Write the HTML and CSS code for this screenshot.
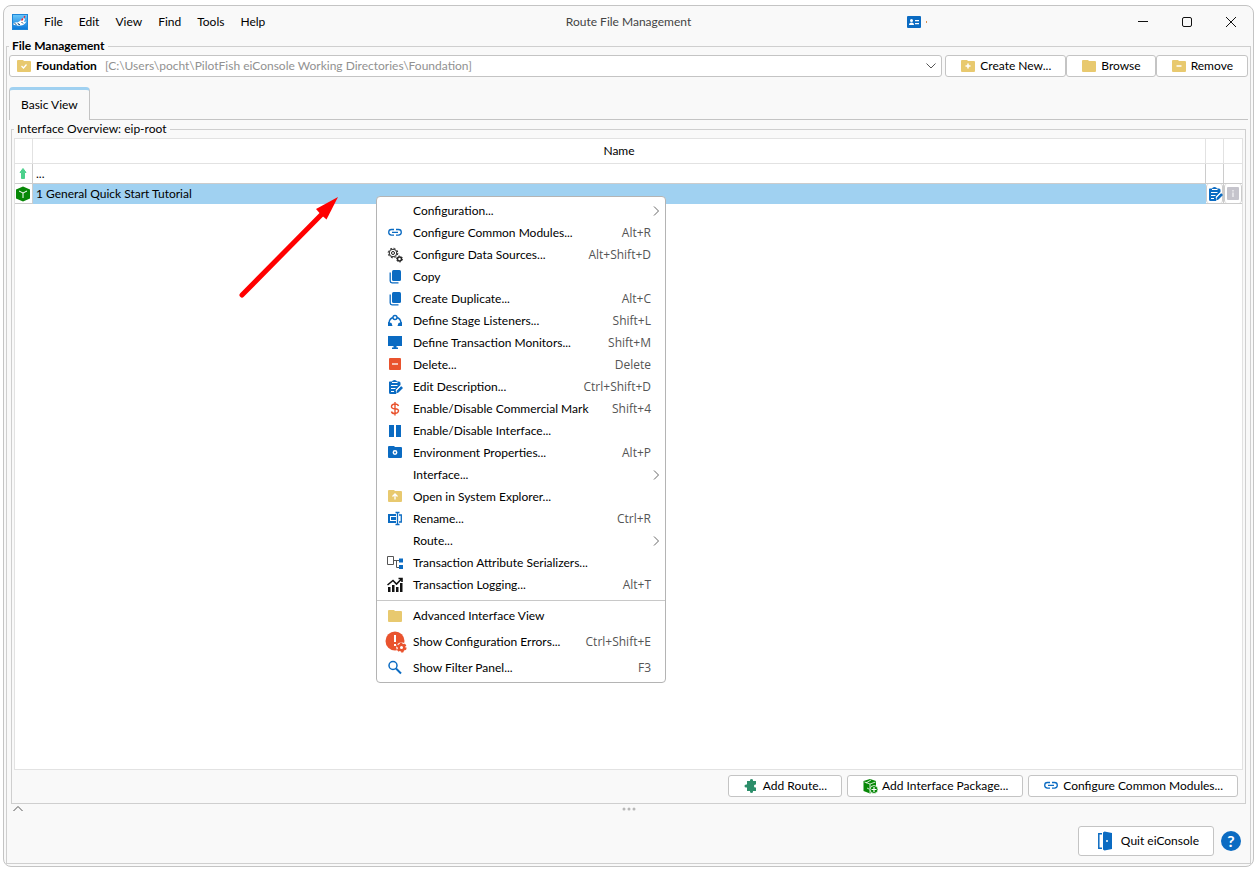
FILE: index.html
```html
<!DOCTYPE html>
<html lang="en">
<head>
  <meta charset="UTF-8">
  <meta name="viewport" content="width=device-width, initial-scale=1.0">
  <title>Route File Management</title>
  <link rel="stylesheet" href="styles.css">
</head>
<body>
  <!-- Shared icons -->
  <svg class="sprite" aria-hidden="true">
    <symbol id="i-folder" viewBox="0 0 16 16"><path fill="#e8c96f" d="M2 2h5l1 1h6q1 0 1 1v9q0 1-1 1H2q-1 0-1-1V3q0-1 1-1z"/></symbol>
    <symbol id="i-link" viewBox="0 0 16 16"><path fill="none" stroke="#0b6bc2" stroke-width="1.300" d="M7 4.500H4.500a2.800 2.800 0 0 0 0 5.600H7M9 4.500h2.500a2.800 2.800 0 0 1 0 5.600H9M5 7.300h6"/></symbol>
    <symbol id="i-copy" viewBox="0 0 16 16"><rect x="5" y="1" width="9" height="11" rx="1.500" fill="#0b6bc2"/><path fill="none" stroke="#0b6bc2" stroke-width="1.300" d="M3.200 3.500v8.500q0 1.800 1.800 1.800h6.500"/></symbol>
    <symbol id="i-edit" viewBox="0 0 16 16"><path fill="#0b6bc2" d="M2.500 2.500H5Q5.500 1 7.500 1T10 2.500h2q1.500 0 1.500 1.500v2L9 10.500V15H3.500Q2 15 2 13.500V3z"/><path fill="#0b6bc2" d="M10 11.500l4-4.500 2 2-4.500 4.500-2.500 1z"/><path stroke="#fff" d="M5 3.500h5.500M4 6.500h6.500M4 9.500h4.500M4 12.500h3M9 11.500l4.500-4.500"/></symbol>
  </svg>

  <div class="window">
    <header class="titlebar">
      <div class="titlebar-left">
        <svg class="logo" viewBox="0 0 16 16">
          <defs><linearGradient id="logo-fill" x2="0" y2="1"><stop stop-color="#6cc9fb"/><stop offset="1" stop-color="#0876d8"/></linearGradient></defs>
          <rect x=".5" y=".5" width="15" height="15" fill="url(#logo-fill)" stroke="#1e86d8"/>
          <path fill="#fff" d="M1 10q2-2.500 4.500-1.500L8 7l3-3 2 1-1 3 2.500-.5-1.500 2q-2 2.500-5 2-2 .5-4-.5-2 .500-3-1z"/>
          <path fill="none" stroke="#164b7b" d="M2.500 9.500l2 1M6 9q0 2 2 1.500M9.500 8l1.500 1.500"/>
          <path fill="none" stroke="#e32233" stroke-width="1.400" d="M9.500 6.500l1.500-2M12 3.500l1-1.200"/>
        </svg>
        <nav class="menubar">
          <button type="button">File</button>
          <button type="button">Edit</button>
          <button type="button">View</button>
          <button type="button">Find</button>
          <button type="button">Tools</button>
          <button type="button">Help</button>
        </nav>
      </div>
      <h1 class="title">Route File Management</h1>
      <div class="titlebar-right">
        <div class="account">
          <svg class="icon" viewBox="0 0 16 16"><rect x="1" y="2" width="14" height="12" rx="1" fill="#0b6bc2"/><circle cx="5.500" cy="6.500" r="1.500" fill="#fff"/><path fill="#fff" d="M3 11q0-2.500 2.500-2.500T8 11zM9 6h4v1.300H9zM9 9h4v1.300H9z"/></svg>
          <span class="account-dot"></span>
        </div>
        <div class="window-controls">
          <button type="button" aria-label="Minimize"><svg class="icon" viewBox="0 0 16 16"><path d="M3 7.500h10"/></svg></button>
          <button type="button" aria-label="Maximize"><svg class="icon" viewBox="0 0 16 16"><rect x="3.500" y="3.500" width="9" height="9" rx="1.500"/></svg></button>
          <button type="button" aria-label="Close"><svg class="icon" viewBox="0 0 16 16"><path d="M3 3l10 10M13 3L3 13"/></svg></button>
        </div>
      </div>
    </header>

    <fieldset class="group management">
      <legend>File Management</legend>

      <div class="toolbar">
        <div class="combo">
          <svg class="icon" viewBox="0 0 16 16"><use href="#i-folder"/><path fill="none" stroke="#fff" stroke-width="1.300" d="M5.500 8l2 2 3-3.500"/></svg>
          <label for="directory">Foundation</label>
          <select id="directory">
            <option>[C:\Users\pocht\PilotFish eiConsole Working Directories\Foundation]</option>
          </select>
          <svg class="chevron" viewBox="0 0 10 10"><path d="M.5 2.500L5 7l4.500-4.500"/></svg>
        </div>
        <div class="toolbar-buttons">
          <button class="btn" type="button">
            <svg class="icon" viewBox="0 0 16 16"><use href="#i-folder"/><path stroke="#fff" stroke-width="1.500" d="M5.500 8h5M8 5.500v5"/></svg>
            Create New...
          </button>
          <button class="btn" type="button">
            <svg class="icon"><use href="#i-folder"/></svg>
            Browse
          </button>
          <button class="btn" type="button">
            <svg class="icon" viewBox="0 0 16 16"><use href="#i-folder"/><path stroke="#fff" stroke-width="1.500" d="M5.500 8h5"/></svg>
            Remove
          </button>
        </div>
      </div>

      <div class="tabs">
        <button class="tab" type="button">Basic View</button>
      </div>

      <fieldset class="group overview">
        <legend>Interface Overview: eip-root</legend>

        <div class="table-wrap">
          <table class="routes">
            <colgroup>
              <col class="col-icon">
              <col>
              <col class="col-icon">
              <col class="col-icon">
            </colgroup>
            <thead>
              <tr><th></th><th>Name</th><th></th><th></th></tr>
            </thead>
            <tbody>
              <tr>
                <td><svg class="icon" viewBox="0 0 16 16"><path fill="#4bd08b" stroke="#4bd08b" stroke-linejoin="round" d="M8 2.500L11 6.500H9.500v6h-3v-6H5z"/></svg></td>
                <td class="name">...</td>
                <td></td>
                <td></td>
              </tr>
              <tr class="selected">
                <td><svg class="icon" viewBox="0 0 16 16"><path fill="#078807" d="M8 .5l7 3v9l-7 3-7-3v-9z"/><path fill="none" stroke="#fff" d="M4 5l4 2 4-2M8 7v5"/></svg></td>
                <td class="name">1 General Quick Start Tutorial</td>
                <td><button class="cell-btn" type="button" aria-label="Edit description"><svg class="icon"><use href="#i-edit"/></svg></button></td>
                <td><button class="cell-btn" type="button" aria-label="Information" disabled><svg class="icon" viewBox="0 0 16 16"><rect x="2" y="1" width="12" height="13" rx="1" fill="#c5c4cc"/><path stroke="#f2f1f5" stroke-width="1.300" d="M8 4v1.500M8 6.500V11"/></svg></button></td>
              </tr>
            </tbody>
          </table>
        </div>

        <div class="actions">
          <button class="btn" type="button">
            <svg class="icon" viewBox="0 0 16 16"><path fill="#2c8e6a" d="M4 3h3q-.5-2 1.500-2T10 3h3v3.500q-2-.5-2 1.500t2 1.500V13h-3q.500 2-1.500 2T7 13H4v-3.500q-2.500.5-2.500-1.500T4 6.500z"/></svg>
            Add Route...
          </button>
          <button class="btn" type="button">
            <svg class="icon" viewBox="0 0 16 16"><path fill="#078807" d="M8 1l6 2v10l-6 2.500L1.500 13V3z"/><path fill="none" stroke="#fff" stroke-width=".8" d="M2.500 4L8 6l5.500-2M8 6v9M4 5l5-3M5 10l2 1"/><circle cx="12" cy="11.500" r="4" fill="#078807" stroke="#fff" stroke-width=".8"/><path stroke="#fff" stroke-width="1.200" d="M9.500 11.500h5M12 9v5"/></svg>
            Add Interface Package...
          </button>
          <button class="btn" type="button">
            <svg class="icon"><use href="#i-link"/></svg>
            Configure Common Modules...
          </button>
        </div>
      </fieldset>

      <div class="splitter">
        <svg class="chevron" viewBox="0 0 10 10"><path d="M.5 7L5 2.500 9.500 7"/></svg>
        <svg class="grip" viewBox="0 0 14 4"><circle cx="2" cy="2" r="1.500"/><circle cx="7" cy="2" r="1.500"/><circle cx="12" cy="2" r="1.500"/></svg>
      </div>

      <footer class="footer">
        <button class="btn btn-quit" type="button">
          <svg viewBox="0 0 20 20"><path fill="none" stroke="#0b6bc2" stroke-width="1.500" d="M7 2.800H3.800v14.500H7"/><path fill="#0b6bc2" d="M8 1.500L9.500 .5 17 2v16l-7.500 1.500L8 18.500z"/><circle cx="12" cy="10" r="1" fill="#fff"/></svg>
          Quit eiConsole
        </button>
        <button class="help" type="button" aria-label="Help">?</button>
      </footer>
    </fieldset>

    <!-- Points at the selected route -->
    <svg class="arrow" viewBox="0 0 102 104">
      <path fill="none" stroke="#f00" stroke-width="5" stroke-linecap="round" d="M4 100L86 17"/>
      <path fill="#f00" d="M100 2L78 14l3.500 4 3 3 4 3.500z"/>
    </svg>

    <div class="context-menu" role="menu">
      <button type="button" role="menuitem">
        <span class="icon"></span><span class="text">Configuration...</span>
        <svg class="submenu" viewBox="0 0 10 10"><path d="M3 .5L7.500 5 3 9.500"/></svg>
      </button>
      <button type="button" role="menuitem">
        <svg class="icon"><use href="#i-link"/></svg>
        <span class="text">Configure Common Modules...</span><kbd>Alt+R</kbd>
      </button>
      <button type="button" role="menuitem">
        <svg class="icon" viewBox="0 0 16 16"><g fill="none" stroke="#222"><circle cx="6" cy="6" r="3.800"/><circle cx="6" cy="6" r="1.500"/><circle cx="6" cy="6" r="4.800" stroke-dasharray="2 1.770"/><circle cx="12.500" cy="12" r="2" stroke-width="1.500"/><circle cx="12.500" cy="12" r="3" stroke-dasharray="1.500 1.640"/></g></svg>
        <span class="text">Configure Data Sources...</span><kbd>Alt+Shift+D</kbd>
      </button>
      <button type="button" role="menuitem">
        <svg class="icon"><use href="#i-copy"/></svg>
        <span class="text">Copy</span>
      </button>
      <button type="button" role="menuitem">
        <svg class="icon"><use href="#i-copy"/></svg>
        <span class="text">Create Duplicate...</span><kbd>Alt+C</kbd>
      </button>
      <button type="button" role="menuitem">
        <svg class="icon" viewBox="0 0 16 16"><g fill="none" stroke="#0b6bc2" stroke-width="1.400"><circle cx="8" cy="4.500" r="2"/><path d="M6 4.500Q2.500 5.500 2 10M10 4.500Q13.500 5.500 14 10"/></g><path fill="#0b6bc2" d="M1 9l3.500 1 1 3H1zM15 9l-3.500 1-1 3H15z"/></svg>
        <span class="text">Define Stage Listeners...</span><kbd>Shift+L</kbd>
      </button>
      <button type="button" role="menuitem">
        <svg class="icon" viewBox="0 0 16 16"><path fill="#0b6bc2" d="M1 1h14v10H9.500v1.500H11V14H5v-1.500h1.500V11H1z"/></svg>
        <span class="text">Define Transaction Monitors...</span><kbd>Shift+M</kbd>
      </button>
      <button type="button" role="menuitem">
        <svg class="icon" viewBox="0 0 16 16"><rect x="2" y="1" width="12" height="12" rx="1" fill="#e9532e"/><path stroke="#fff" stroke-width="1.300" d="M5 7h6"/></svg>
        <span class="text">Delete...</span><kbd>Delete</kbd>
      </button>
      <button type="button" role="menuitem">
        <svg class="icon"><use href="#i-edit"/></svg>
        <span class="text">Edit Description...</span><kbd>Ctrl+Shift+D</kbd>
      </button>
      <button type="button" role="menuitem">
        <svg class="icon" viewBox="0 0 16 16"><path fill="none" stroke="#e9532e" stroke-width="1.400" d="M11.500 5Q11 3 8 3T4.500 5.200 8 7.800t3.500 2.400T8 12.500 4.500 10.500M8 1v13.500"/></svg>
        <span class="text">Enable/Disable Commercial Mark</span><kbd>Shift+4</kbd>
      </button>
      <button type="button" role="menuitem">
        <svg class="icon" viewBox="0 0 16 16"><path fill="#0b6bc2" d="M2 2h5v12H2zM9 2h5v12H9z"/></svg>
        <span class="text">Enable/Disable Interface...</span>
      </button>
      <button type="button" role="menuitem">
        <svg class="icon" viewBox="0 0 16 16"><path fill="#0b6bc2" d="M2 1h5l1 1h6q1 0 1 1v9q0 1-1 1H2q-1 0-1-1V2q0-1 1-1z"/><circle cx="8" cy="7.500" r="1.700" fill="none" stroke="#fff" stroke-width="1.500"/></svg>
        <span class="text">Environment Properties...</span><kbd>Alt+P</kbd>
      </button>
      <button type="button" role="menuitem">
        <span class="icon"></span><span class="text">Interface...</span>
        <svg class="submenu" viewBox="0 0 10 10"><path d="M3 .5L7.500 5 3 9.500"/></svg>
      </button>
      <button type="button" role="menuitem">
        <svg class="icon" viewBox="0 0 16 16"><path fill="#e8c96f" d="M2 1h5l1 1h6q1 0 1 1v9q0 1-1 1H2q-1 0-1-1V2q0-1 1-1z"/><path fill="none" stroke="#fff" stroke-width="1.300" d="M8 10.500V5.500M5.500 7.500L8 5l2.500 2.500"/></svg>
        <span class="text">Open in System Explorer...</span>
      </button>
      <button type="button" role="menuitem">
        <svg class="icon" viewBox="0 0 16 16"><path fill="#0b6bc2" d="M1 3h8v2H3v5h6v2H1zM4 6h5v3H4z"/><path fill="none" stroke="#0b6bc2" stroke-width="1.300" d="M10.500 2v11.500M8.500 1.500h4M8.500 13.500h4M12 4h2.300v7H12"/></svg>
        <span class="text">Rename...</span><kbd>Ctrl+R</kbd>
      </button>
      <button type="button" role="menuitem">
        <span class="icon"></span><span class="text">Route...</span>
        <svg class="submenu" viewBox="0 0 10 10"><path d="M3 .5L7.500 5 3 9.500"/></svg>
      </button>
      <button type="button" role="menuitem">
        <svg class="icon" viewBox="0 0 16 16"><path fill="none" stroke="#555" d="M.5 1.500h6v8h-6zM6.500 5.500h6M9.500 5.500v7H12"/><path fill="#0b6bc2" d="M12 3.500h4v4h-4zM12 10h4v4h-4z"/></svg>
        <span class="text">Transaction Attribute Serializers...</span>
      </button>
      <button type="button" role="menuitem">
        <svg class="icon" viewBox="0 0 16 16"><path fill="#111" d="M1 10h2.500v5H1zM5 8h2.500v7H5zM9 10h2.500v5H9zM13 6h2.500v9H13z"/><path fill="none" stroke="#111" stroke-width="1.600" d="M.5 8L6 3.500 9.500 7 15 1.500M11.500 1.500H15V5"/></svg>
        <span class="text">Transaction Logging...</span><kbd>Alt+T</kbd>
      </button>
      <hr>
      <button type="button" role="menuitem">
        <svg class="icon"><use href="#i-folder"/></svg>
        <span class="text">Advanced Interface View</span>
      </button>
      <button class="tall" type="button" role="menuitem">
        <svg class="icon-large" viewBox="0 0 22 22"><circle cx="10" cy="10" r="9.500" fill="#e9532e"/><path stroke="#fff" stroke-width="2" d="M10 4v7M10 13v2"/><circle cx="16.500" cy="16.500" r="5.200" fill="#fff"/><circle cx="16.500" cy="16.500" r="2.700" fill="none" stroke="#e9532e" stroke-width="2.400"/><circle cx="16.500" cy="16.500" r="4.200" fill="none" stroke="#e9532e" stroke-width="1.800" stroke-dasharray="2.400 2"/></svg>
        <span class="text">Show Configuration Errors...</span><kbd>Ctrl+Shift+E</kbd>
      </button>
      <button type="button" role="menuitem">
        <svg class="icon" viewBox="0 0 16 16"><g fill="none" stroke="#0b6bc2" stroke-width="1.500"><circle cx="6" cy="5.500" r="4"/><path stroke-width="2" d="M9 8.500l5 5"/></g></svg>
        <span class="text">Show Filter Panel...</span><kbd>F3</kbd>
      </button>
    </div>
  </div>
</body>
</html>
```
FILE: styles.css
```css
:root {
  --window-bg: #f9f9f9;
  --border: #c4c4c4;
  --group-border: #cfcfcf;
  --grid: #e2e2e2;
  --selection: #a0d1f1;
  --blue: #0b6bc2;
  --text: #000;
}

* {
  margin: 0;
  padding: 0;
  box-sizing: border-box;
}

body {
  height: 100vh;
  padding: 5px 6px 13px 3px;
  background: #fff;
  color: var(--text);
  font: 12px/16px Lato, "Open Sans", sans-serif;
}

button,
select {
  font: inherit;
  color: inherit;
  background: none;
  border: none;
}

.sprite {
  display: none;
}

.icon {
  display: block;
  width: 16px;
  height: 16px;
  flex-shrink: 0;
}

.window {
  position: relative;
  display: flex;
  flex-direction: column;
  height: 100%;
  background: var(--window-bg);
  border: 1px solid var(--border);
  border-radius: 8px;
}

/* Title bar */
.titlebar {
  display: grid;
  grid-template-columns: 1fr auto 1fr;
  align-items: center;
  height: 32px;
}

.titlebar-left {
  display: flex;
  align-items: center;
  gap: 8px;
  padding-left: 8px;
}

.logo {
  width: 16px;
  height: 16px;
}

.menubar {
  display: flex;
}

.menubar button {
  padding: 4px 8px;
}

.title {
  font-size: 12px;
  font-weight: 400;
  color: #444;
}

.titlebar-right {
  display: flex;
  justify-content: flex-end;
  align-items: center;
}

.account {
  display: flex;
  align-items: center;
  gap: 4px;
  width: 215px;
}

.account-dot {
  width: 1px;
  height: 2px;
  background: #e0904c;
}

.window-controls {
  display: flex;
}

.window-controls button {
  display: flex;
  justify-content: center;
  width: 44px;
}

.window-controls .icon {
  fill: none;
  stroke: #111;
}

/* Groups */
.group {
  display: flex;
  flex-direction: column;
  flex: 1;
  min-width: 0;
  min-height: 0;
  border: 1px solid var(--group-border);
}

.group legend {
  padding: 0 3px;
}

.management {
  margin: 0 2px 2px;
  padding: 0 2px;
}

.management > legend {
  font-weight: 700;
}

.toolbar {
  display: flex;
  gap: 3px;
  padding-top: 1px;
}

.combo {
  position: relative;
  display: flex;
  flex: 1;
  align-items: center;
  height: 22px;
  padding-left: 6px;
  background: #fff;
  border: 1px solid var(--border);
  border-radius: 3px;
}

.combo label {
  margin: 0 8px 0 4px;
  font-weight: 700;
}

.combo select {
  flex: 1;
  min-width: 0;
  appearance: none;
  color: #919191;
}

.chevron {
  width: 10px;
  height: 10px;
  fill: none;
  stroke: #555;
}

.combo .chevron {
  position: absolute;
  right: 5px;
  pointer-events: none;
}

.toolbar-buttons {
  display: flex;
}

.btn {
  display: flex;
  align-items: center;
  gap: 4px;
  height: 22px;
  padding: 0 14px;
  background: #fff;
  border: 1px solid var(--border);
  border-radius: 3px;
  white-space: nowrap;
}

.tabs {
  display: flex;
  margin-top: 10px;
  height: 33px;
  border-bottom: 1px solid var(--border);
}

.tab {
  height: 33px;
  padding: 0 11px;
  background: var(--window-bg);
  border: 1px solid var(--border);
  border-top: 3px solid var(--selection);
  border-bottom: none;
  border-radius: 4px 4px 0 0;
}

/* Overview */
.overview {
  margin: 1px 2px 0;
  padding: 0 2px 6px;
}

.table-wrap {
  flex: 1;
  margin-top: 1px;
  background: #fff;
  border: 1px solid var(--grid);
}

.routes {
  width: 100%;
  table-layout: fixed;
  border-collapse: separate;
  border-spacing: 0;
}

.col-icon {
  width: 18px;
}

.routes th {
  height: 25px;
  font-weight: 400;
  border-right: 1px solid var(--grid);
  border-bottom: 1px solid var(--grid);
}

.routes td {
  height: 20px;
  border-right: 1px solid #ccc;
  border-bottom: 1px solid #ccc;
}

.routes th:last-child,
.routes td:last-child {
  border-right: none;
}

.routes .name {
  padding-left: 3px;
}

.selected .name {
  background: var(--selection);
  border-color: var(--selection);
}

.cell-btn {
  display: flex;
  justify-content: center;
  align-items: center;
  width: 100%;
  height: 19px;
  background: #fff;
  border-left: 1px solid #ccc;
  border-right: 1px solid #ccc;
  border-radius: 3px;
}

.actions {
  display: flex;
  justify-content: flex-end;
  gap: 5px;
  padding: 5px 5px 0 0;
}

/* Splitter and footer */
.splitter {
  display: grid;
  grid-template-columns: 1fr auto 1fr;
  align-items: center;
  height: 10px;
}

.splitter .chevron {
  margin-left: 4px;
}

.grip {
  width: 14px;
  height: 4px;
  fill: #b8b8b8;
}

.footer {
  display: flex;
  justify-content: flex-end;
  align-items: center;
  gap: 7px;
  padding: 12px 7px 7px 0;
}

.btn-quit {
  height: 30px;
  gap: 6px;
  padding: 0 14px 0 16px;
}

.btn-quit svg {
  width: 20px;
  height: 20px;
}

.help {
  width: 20px;
  height: 20px;
  border-radius: 50%;
  background: var(--blue);
  color: #fff;
  font-size: 16px;
  font-weight: 700;
  line-height: 20px;
}

/* Overlays */
.arrow {
  position: absolute;
  top: 189px;
  left: 234px;
  width: 102px;
  height: 104px;
  pointer-events: none;
}

.context-menu {
  position: absolute;
  top: 190px;
  left: 372px;
  width: 290px;
  padding: 3px 0;
  background: #fff;
  border: 1px solid #b4b4b4;
  border-radius: 4px;
}

.context-menu button {
  display: flex;
  align-items: center;
  width: 100%;
  height: 22px;
  padding: 0 14px 0 10px;
  text-align: left;
  white-space: nowrap;
}

.context-menu .tall {
  height: 30px;
  padding-left: 8px;
}

.context-menu .text {
  flex: 1;
  margin-left: 10px;
}

.context-menu .icon-large {
  width: 22px;
  height: 22px;
}

.context-menu .tall .text {
  margin-left: 6px;
}

.context-menu kbd {
  font-family: "Open Sans", sans-serif;
  font-size: 12px;
  color: #555;
}

.context-menu .submenu {
  width: 10px;
  height: 10px;
  margin-right: -10px;
  fill: none;
  stroke: #666;
}

.context-menu hr {
  margin: 4px 0;
  border: none;
  border-top: 1px solid #c8c8c8;
}
```
